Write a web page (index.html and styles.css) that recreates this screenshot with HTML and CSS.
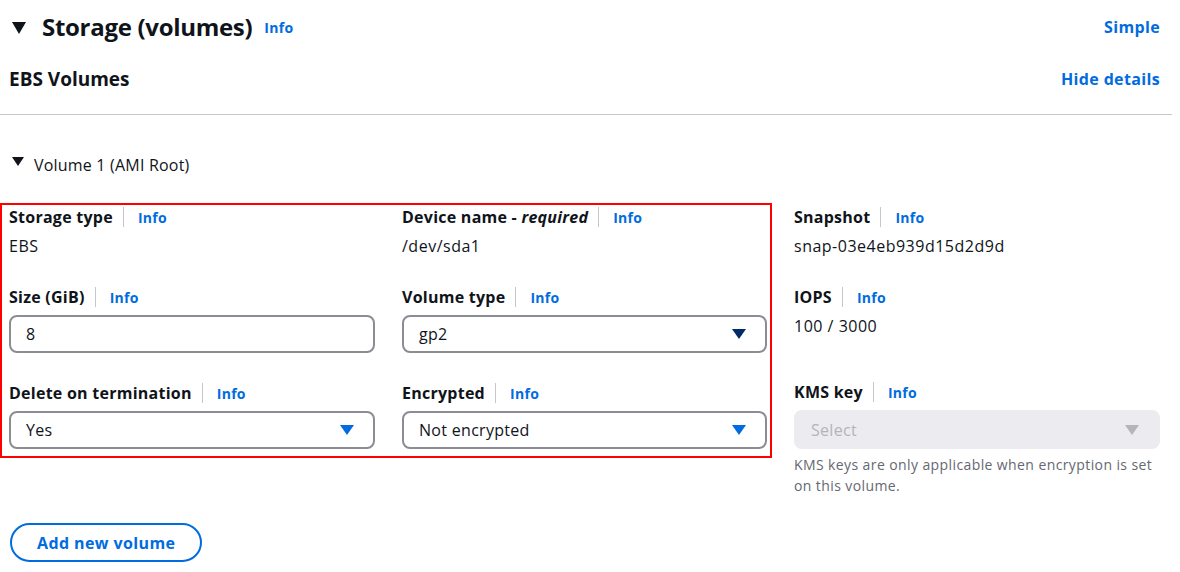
FILE: index.html
```html
<!DOCTYPE html>
<html lang="en">
<head>
<meta charset="utf-8">
<title>Storage (volumes)</title>
<link rel="stylesheet" href="styles.css">
</head>
<body>
<div class="page">
  <div class="header">
    <div class="title-group">
      <svg class="caret-lg" width="14" height="12" viewBox="0 0 14 12"><path d="M0 0H14L7 12Z" fill="#0f141a"/></svg>
      <h2 class="title">Storage (volumes)</h2>
      <a class="info info-title">Info</a>
    </div>
    <a class="action">Simple</a>
  </div>

  <div class="subheader">
    <h3 class="subtitle">EBS Volumes</h3>
    <a class="action">Hide details</a>
  </div>
  <div class="divider"></div>

  <div class="volume-head">
    <svg class="caret-sm" width="12" height="9" viewBox="0 0 12 9"><path d="M0 0H12L6 9Z" fill="#0f141a"/></svg>
    <span>Volume 1 (AMI Root)</span>
  </div>

  <div class="volume-body">
    <div class="highlight">
      <div class="fields">
        <div class="field">
          <div class="label"><span class="label-text">Storage type</span><span class="sep"></span><a class="info">Info</a></div>
          <div class="value">EBS</div>
        </div>
        <div class="field">
          <div class="label"><span class="label-text">Device name - <i>required</i></span><span class="sep"></span><a class="info">Info</a></div>
          <div class="value">/dev/sda1</div>
        </div>
        <div class="field">
          <div class="label"><span class="label-text">Size (GiB)</span><span class="sep"></span><a class="info">Info</a></div>
          <div class="input">8</div>
        </div>
        <div class="field">
          <div class="label"><span class="label-text">Volume type</span><span class="sep"></span><a class="info">Info</a></div>
          <div class="input select"><span>gp2</span><svg class="arrow" width="14" height="10" viewBox="0 0 14 10"><path d="M0 0H14L7 10Z" fill="#002b66"/></svg></div>
        </div>
        <div class="field">
          <div class="label"><span class="label-text">Delete on termination</span><span class="sep"></span><a class="info">Info</a></div>
          <div class="input select"><span>Yes</span><svg class="arrow" width="14" height="10" viewBox="0 0 14 10"><path d="M0 0H14L7 10Z" fill="#006ce0"/></svg></div>
        </div>
        <div class="field">
          <div class="label"><span class="label-text">Encrypted</span><span class="sep"></span><a class="info">Info</a></div>
          <div class="input select"><span>Not encrypted</span><svg class="arrow" width="14" height="10" viewBox="0 0 14 10"><path d="M0 0H14L7 10Z" fill="#006ce0"/></svg></div>
        </div>
      </div>
    </div>

    <div class="side">
      <div class="field">
        <div class="label"><span class="label-text">Snapshot</span><span class="sep"></span><a class="info">Info</a></div>
        <div class="value">snap-03e4eb939d15d2d9d</div>
      </div>
      <div class="field field-tall">
        <div class="label"><span class="label-text">IOPS</span><span class="sep"></span><a class="info">Info</a></div>
        <div class="value">100 / 3000</div>
      </div>
      <div class="field">
        <div class="label"><span class="label-text">KMS key</span><span class="sep"></span><a class="info">Info</a></div>
        <div class="input select disabled"><span>Select</span><svg class="arrow" width="14" height="10" viewBox="0 0 14 10"><path d="M0 0H14L7 10Z" fill="#b4b4bb"/></svg></div>
        <div class="help">KMS keys are only applicable when encryption is set on this volume.</div>
      </div>
    </div>
  </div>

  <button class="add-btn">Add new volume</button>
</div>
</body>
</html>
```

FILE: styles.css
```css
* { box-sizing: border-box; }
html, body { margin: 0; padding: 0; background: #ffffff; }
body {
  font-family: "Open Sans", "Noto Sans", Arial, sans-serif;
  color: #0f141a;
  font-size: 16px;
}
a { color: #006ce0; text-decoration: none; cursor: pointer; }

.page { width: 1180px; height: 572px; overflow: hidden; padding: 0 20px 0 0; }

.header {
  display: flex;
  justify-content: space-between;
  align-items: center;
  padding: 11px 0 0 12px;
  height: 43px;
}
.title-group { display: flex; align-items: center; }
.caret-lg { margin-right: 16px; margin-top: 1px; }
.title { margin: 0; font-size: 24px; line-height: 32px; font-weight: 700; letter-spacing: -0.3px; }
.info-title { margin-left: 12px; margin-top: 5px; }
.action { font-size: 16px; font-weight: 700; line-height: 22px; letter-spacing: 0.35px; }

.subheader {
  display: flex;
  justify-content: space-between;
  align-items: flex-start;
  padding: 24px 0 0 9px;
  height: 72px;
}
.subtitle { margin: 0; font-size: 19px; line-height: 24px; font-weight: 700; }
.subheader .action { margin-top: 1px; }

.divider { height: 1px; background: #c6c6cd; width: 1172px; margin-top: -1px; }

.volume-head {
  display: flex;
  align-items: flex-start;
  padding: 40px 0 0 12px;
  height: 88px;
  font-size: 16px;
  line-height: 22px;
}
.caret-sm { margin: 2px 10px 0 0; }
.volume-head span { margin-top: -1px; letter-spacing: 0.2px; }

.volume-body { display: flex; align-items: flex-start; }

.highlight {
  border: 2px solid #ff0000;
  width: 772px;
  padding: 2px 2px 7px 7px;
}
.fields {
  display: grid;
  grid-template-columns: 366px 365px;
  column-gap: 27px;
  row-gap: 30px;
}
.side {
  width: 366px;
  margin-left: 22px;
  margin-top: 4px;
  display: flex;
  flex-direction: column;
  gap: 30px;
}

.field { display: flex; flex-direction: column; }
.field-tall { min-height: 65px; }
.label {
  display: flex;
  align-items: center;
  height: 20px;
  margin-bottom: 8px;
}
.label-text { font-weight: 700; font-size: 16px; line-height: 20px; letter-spacing: 0.25px; }
.label-text i { font-style: italic; }
.sep { width: 1px; height: 20px; background: #c6c6cd; margin: 0 14px 0 10px; }
.info { font-size: 14px; font-weight: 700; line-height: 20px; margin-top: 1px; letter-spacing: 0.3px; }

.value { font-size: 16px; line-height: 22px; letter-spacing: 0.5px; }

.input {
  height: 38px;
  border: 2px solid #8c8c94;
  border-radius: 8px;
  padding: 0 15px;
  display: flex;
  align-items: center;
  font-size: 16px;
  letter-spacing: 0.3px;
}
.select { justify-content: space-between; }
.select .arrow { margin-right: 4px; }
.disabled { background: #ebebf0; border-color: #ebebf0; color: #b4b4bb; height: 39px; }

.help { margin-top: 5px; font-size: 14px; line-height: 21px; color: #656871; letter-spacing: 0.4px; }

.add-btn {
  margin: 27px 0 0 10px;
  height: 39px;
  padding: 0 25px;
  border: 2px solid #006ce0;
  border-radius: 20px;
  background: #fff;
  color: #006ce0;
  font-family: inherit;
  font-size: 16px;
  font-weight: 700;
  letter-spacing: 0.4px;
}
```
